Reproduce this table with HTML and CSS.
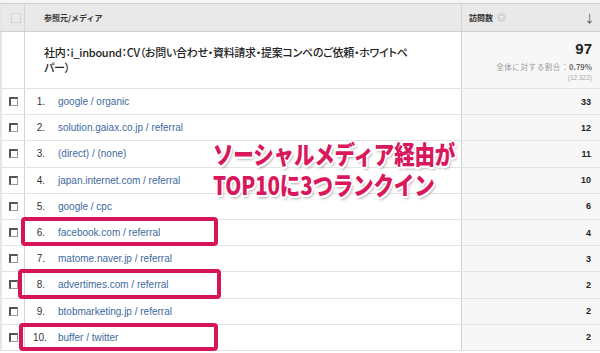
FILE: index.html
```html
<!DOCTYPE html>
<html lang="ja">
<head>
<meta charset="utf-8">
<link rel="stylesheet" href="styles.css">
</head>
<body>
<div class="report">
  <div class="row head">
    <div class="cell chk"><span class="box box-head"></span></div>
    <div class="cell name">参照元/メディア</div>
    <div class="cell val"><span class="vh">訪問数 <span class="help">?</span></span><span class="arrow">↓</span></div>
  </div>
  <div class="row summary">
    <div class="cell chk"></div>
    <div class="cell name"><p class="desc">社内：i_inbound：CV（お問い合わせ・資料請求・提案コンペのご依頼・ホワイトペ<br>パー）</p></div>
    <div class="cell val">
      <div class="total">97</div>
      <div class="pct">全体に対する割合：<b>0.79%</b></div>
      <div class="all">(12,322)</div>
    </div>
  </div>
  <div class="row"><div class="cell chk"><span class="box"></span></div><div class="cell name"><span class="num">1.</span><span class="link">google / organic</span></div><div class="cell val">33</div></div>
  <div class="row"><div class="cell chk"><span class="box"></span></div><div class="cell name"><span class="num">2.</span><span class="link">solution.gaiax.co.jp / referral</span></div><div class="cell val">12</div></div>
  <div class="row"><div class="cell chk"><span class="box"></span></div><div class="cell name"><span class="num">3.</span><span class="link">(direct) / (none)</span></div><div class="cell val">11</div></div>
  <div class="row"><div class="cell chk"><span class="box"></span></div><div class="cell name"><span class="num">4.</span><span class="link">japan.internet.com / referral</span></div><div class="cell val">10</div></div>
  <div class="row"><div class="cell chk"><span class="box"></span></div><div class="cell name"><span class="num">5.</span><span class="link">google / cpc</span></div><div class="cell val">6</div></div>
  <div class="row"><div class="cell chk"><span class="box"></span></div><div class="cell name"><span class="num">6.</span><span class="link">facebook.com / referral</span></div><div class="cell val">4</div></div>
  <div class="row"><div class="cell chk"><span class="box"></span></div><div class="cell name"><span class="num">7.</span><span class="link">matome.naver.jp / referral</span></div><div class="cell val">3</div></div>
  <div class="row"><div class="cell chk"><span class="box"></span></div><div class="cell name"><span class="num">8.</span><span class="link">advertimes.com / referral</span></div><div class="cell val">2</div></div>
  <div class="row"><div class="cell chk"><span class="box"></span></div><div class="cell name"><span class="num">9.</span><span class="link">btobmarketing.jp / referral</span></div><div class="cell val">2</div></div>
  <div class="row"><div class="cell chk"><span class="box"></span></div><div class="cell name"><span class="num">10.</span><span class="link">buffer / twitter</span></div><div class="cell val">2</div></div>

  <div class="mark mark-6"></div>
  <div class="mark mark-8"></div>
  <div class="mark mark-10"></div>
  <div class="callout"><span>ソーシャルメディア経由が</span><span>TOP10に3つランクイン</span></div>
</div>
</body>
</html>
```

FILE: styles.css
```css
* { box-sizing: border-box; }
html, body { margin: 0; padding: 0; background: #fff; }
body { width: 600px; height: 353px; overflow: hidden; font-family: "Liberation Sans", Arial, "Noto Sans CJK JP", sans-serif; }

.report {
  position: relative;
  width: 600px;
  padding-top: 3px;
  background: #f4f4f4;
}

.row {
  display: grid;
  grid-template-columns: 25px 436px 139px;
  height: 26.2px;
  border-bottom: 1px solid #e3e3e3;
  background: #fff;
}

.cell { display: flex; align-items: center; }
.chk { border-left: 2px solid #e6e6e6; border-right: 1px solid #d4d4d4; padding-left: 7px; }
.name { padding-left: 8px; font-size: 10px; }
.val {
  justify-content: flex-end;
  padding-right: 9px;
  background: #f7f7f7;
  border-left: 1px solid #d4d4d4;
  font-size: 9px;
  font-weight: bold;
  color: #222;
}

.head { height: 29px; background: #e9e9e9; border-top: 1px solid #d0d0d0; border-bottom: 1px solid #d0d0d0; }
.head .chk, .head .val { background: #e9e9e9; }
.head .name { padding-left: 19px; font-size: 8px; font-weight: bold; color: #333; font-family: "Noto Sans CJK JP", sans-serif; }
.head .val { justify-content: space-between; padding-left: 7px; padding-right: 5px; font-size: 8px; font-family: "Noto Sans CJK JP", sans-serif; color: #333; }
.vh { display: flex; align-items: center; gap: 4px; }
.help {
  display: inline-flex; align-items: center; justify-content: center;
  width: 9px; height: 9px; border-radius: 50%;
  background: #d6d6d6; color: #fff; font-size: 6px; font-family: "Liberation Sans", sans-serif;
}
.arrow { font-size: 11px; color: #555; font-weight: normal; }

.box {
  display: block;
  width: 9px; height: 9px;
  background: #fff;
  border: 1px solid #999;
  border-top-color: #555; border-left-color: #555;
  border-top-width: 2px; border-left-width: 2px;
}
.box-head { width: 10px; height: 10px; margin-left: 2px; border: 1px solid #d2d2d2; background: #ececec; }

.summary { height: 57px; }
.summary .name { padding-left: 19px; }
.desc {
  margin: 0;
  font-family: "Noto Sans CJK JP", sans-serif;
  font-feature-settings: "palt";
  font-size: 11px;
  line-height: 15px;
  font-weight: 500;
  color: #222;
  letter-spacing: -0.3px;
}
.summary .val {
  flex-direction: column;
  align-items: flex-end;
  justify-content: flex-start;
  padding-top: 9px;
  padding-right: 8px;
  font-weight: normal;
}
.total { font-size: 15px; font-weight: bold; line-height: 16px; color: #222; }
.pct { font-size: 7.5px; color: #999; margin-top: 4px; font-family: "Noto Sans CJK JP", sans-serif; letter-spacing: 0.6px; }
.pct b { color: #666; letter-spacing: 0; }
.all { font-size: 6.5px; color: #aaa; margin-top: 2px; }

.num { width: 12px; text-align: right; color: #333; margin-right: 13px; flex: none; }
.link { color: #3d6a9e; }

.mark {
  position: absolute;
  border: 4px solid #d6145a;
  border-radius: 4px;
}
.mark-6 { left: 21px; top: 217px; width: 197px; height: 29px; }
.mark-8 { left: 18px; top: 269px; width: 203px; height: 30px; }
.mark-10 { left: 19px; top: 323px; width: 199px; height: 28px; }

.callout {
  position: absolute;
  left: 213px;
  top: 138px;
  display: flex;
  flex-direction: column;
  transform: scaleX(0.82);
  transform-origin: left top;
  font-family: "Noto Sans CJK JP", sans-serif;
  font-weight: 900;
  font-size: 25px;
  line-height: 31px;
  letter-spacing: -0.2px;
  color: #d8175c;
  white-space: nowrap;
  text-shadow:
    -1.5px -1.5px 0 #fff, 1.5px -1.5px 0 #fff, -1.5px 1.5px 0 #fff, 1.5px 1.5px 0 #fff,
    0 -1.5px 0 #fff, 0 1.5px 0 #fff, -1.5px 0 0 #fff, 1.5px 0 0 #fff,
    2px 3px 3px rgba(0,0,0,0.35);
}
```
